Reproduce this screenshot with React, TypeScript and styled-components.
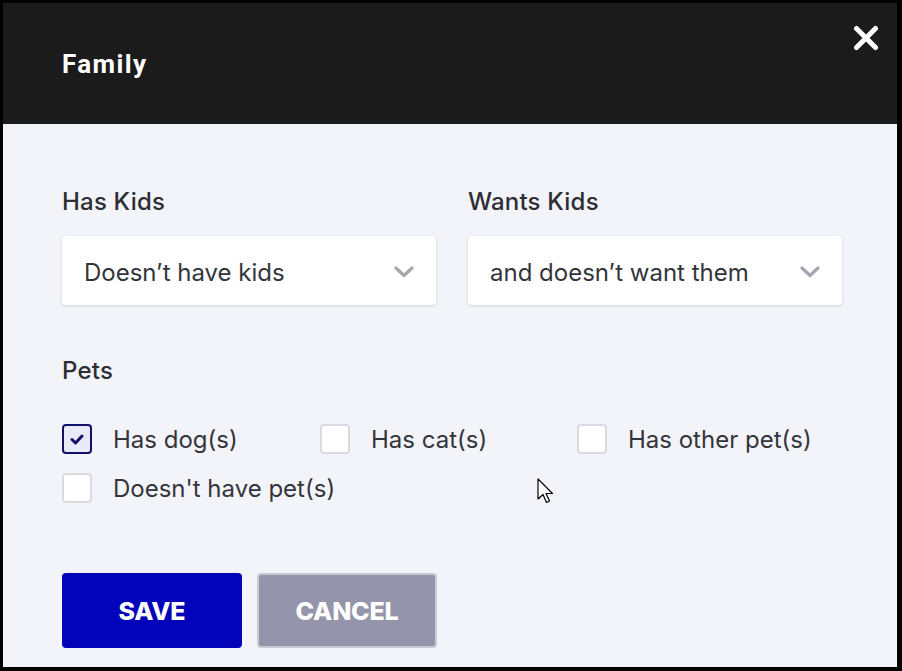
import React from "react";
import styled, { createGlobalStyle } from "styled-components";

const Global = createGlobalStyle`
  html, body { margin: 0; padding: 0; background: #000; }
  body { font-family: Inter, "Noto Sans", sans-serif; }
  * { box-sizing: border-box; }
`;

const Frame = styled.div`
  width: 902px;
  height: 671px;
  padding: 3px 5px 4px 3px;
  background: #000;
`;

const Dialog = styled.div`
  position: relative;
  height: 100%;
  background: #f3f4f9;
  display: flex;
  flex-direction: column;
`;

const Header = styled.div`
  height: 121px;
  background: #1b1b1b;
  display: flex;
  align-items: center;
  padding-left: 59px;
  position: relative;
`;

const Title = styled.h1`
  margin: 0;
  color: #fff;
  font-family: Roboto, Inter, sans-serif;
  font-weight: 700;
  font-size: 26px;
  letter-spacing: 1.4px;
`;

const Close = styled.button`
  position: absolute;
  top: 20px;
  right: 16px;
  width: 30px;
  height: 30px;
  padding: 0;
  border: none;
  background: transparent;
  display: flex;
  align-items: center;
  justify-content: center;
`;

const Body = styled.div`
  padding: 63px 59px 0;
  display: flex;
  flex-direction: column;
`;

const FieldGrid = styled.div`
  display: grid;
  grid-template-columns: 374px 374px;
  column-gap: 32px;
`;

const Field = styled.div`
  display: flex;
  flex-direction: column;
`;

const Label = styled.div`
  font-size: 24px;
  font-weight: 500;
  color: #2c2e34;
  line-height: 30px;
  margin-bottom: 19px;
  letter-spacing: 0.2px;
`;

const Select = styled.div`
  height: 69px;
  background: #fff;
  border-radius: 4px;
  box-shadow: 0 1px 3px rgba(30, 35, 60, 0.18);
  display: flex;
  align-items: center;
  justify-content: space-between;
  padding: 3px 22px 0 22px;
  font-size: 24px;
  color: #33353b;
  white-space: nowrap;
`;

const PetsLabel = styled(Label)`
  margin-top: 51px;
  margin-bottom: 38px;
`;

const PetGrid = styled.div`
  display: grid;
  grid-template-columns: 258px 257px 257px;
  row-gap: 19px;
`;

const PetItem = styled.label`
  display: flex;
  align-items: center;
  gap: 21px;
  font-size: 24px;
  color: #33353b;
  height: 30px;
  white-space: nowrap;
`;

const Box = styled.span<{ $checked?: boolean }>`
  width: 30px;
  height: 30px;
  flex: none;
  border-radius: 4px;
  border: 2px solid ${(p) => (p.$checked ? "#11116b" : "#d9dbe1")};
  background: ${(p) => (p.$checked ? "#e9ebf9" : "#fff")};
  display: flex;
  align-items: center;
  justify-content: center;
`;

const Buttons = styled.div`
  display: flex;
  gap: 15px;
  margin-top: 70px;
`;

const Button = styled.button<{ $primary?: boolean }>`
  width: 180px;
  height: 75px;
  border-radius: 4px;
  border: 2px solid ${(p) => (p.$primary ? "#0303b9" : "#c9cad6")};
  background: ${(p) => (p.$primary ? "#0303b9" : "#9495ab")};
  color: #fff;
  font-family: Inter, "Noto Sans", sans-serif;
  font-weight: 800;
  font-size: 25px;
  letter-spacing: -0.2px;
`;

const Cursor = styled.svg`
  position: absolute;
  left: 534px;
  top: 475px;
`;

const Chevron = () => (
  <svg width="20" height="12" viewBox="0 0 20 12">
    <path d="M2 2 L10 9.5 L18 2" fill="none" stroke="#a4a7ae" strokeWidth="3.2" strokeLinecap="round" strokeLinejoin="round" />
  </svg>
);

const Check = () => (
  <svg width="14" height="11" viewBox="0 0 14 11">
    <path d="M2 5.5 L5.5 9 L12 2" fill="none" stroke="#11116b" strokeWidth="3" strokeLinecap="round" strokeLinejoin="round" />
  </svg>
);

const pets = [
  { label: "Has dog(s)", checked: true },
  { label: "Has cat(s)", checked: false },
  { label: "Has other pet(s)", checked: false },
  { label: "Doesn't have pet(s)", checked: false },
];

export default function App() {
  return (
    <>
      <Global />
      <Frame>
        <Dialog>
          <Header>
            <Title>Family</Title>
            <Close aria-label="Close">
              <svg width="26" height="26" viewBox="0 0 26 26">
                <path d="M3.5 3.5 L22.5 22.5 M22.5 3.5 L3.5 22.5" stroke="#fff" strokeWidth="5" strokeLinecap="round" />
              </svg>
            </Close>
          </Header>
          <Body>
            <FieldGrid>
              <Field>
                <Label>Has Kids</Label>
                <Select>
                  <span>Doesn’t have kids</span>
                  <Chevron />
                </Select>
              </Field>
              <Field>
                <Label>Wants Kids</Label>
                <Select>
                  <span>and doesn’t want them</span>
                  <Chevron />
                </Select>
              </Field>
            </FieldGrid>
            <PetsLabel>Pets</PetsLabel>
            <PetGrid>
              {pets.map((p) => (
                <PetItem key={p.label}>
                  <Box $checked={p.checked}>{p.checked && <Check />}</Box>
                  {p.label}
                </PetItem>
              ))}
            </PetGrid>
            <Buttons>
              <Button $primary>SAVE</Button>
              <Button>CANCEL</Button>
            </Buttons>
          </Body>
          <Cursor width="22" height="30" viewBox="0 0 22 30">
            <path d="M1 1 L1 21 L6 16.5 L9.5 24.5 L12.5 23 L9 15.5 L15.5 15.5 Z" fill="#fff" stroke="#000" strokeWidth="1.2" strokeLinejoin="round" />
          </Cursor>
        </Dialog>
      </Frame>
    </>
  );
}
